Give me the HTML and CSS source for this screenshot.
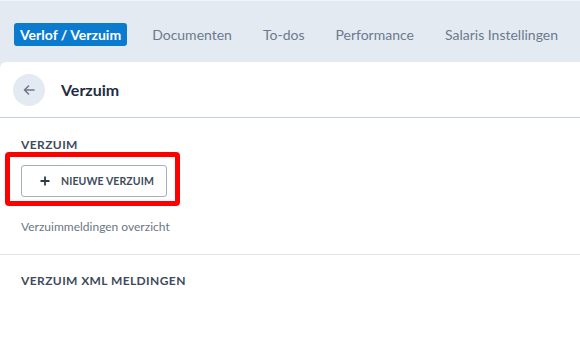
FILE: index.html
```html
<!DOCTYPE html>
<html lang="nl">
<head>
    <meta charset="UTF-8">
    <title>Verzuim</title>
    <link rel="stylesheet" href="styles.css">
</head>
<body>
    <div class="tabs">
        <a href="#" class="tab active">Verlof / Verzuim</a>
        <a href="#" class="tab">Documenten</a>
        <a href="#" class="tab">To-dos</a>
        <a href="#" class="tab">Performance</a>
        <a href="#" class="tab">Salaris Instellingen</a>
    </div>
    <div class="panel">
        <div class="panel-header">
            <button type="button" class="back-btn">
                <svg width="14" height="14" viewBox="0 0 14 14">
                    <path d="M12 7H2.5M6.5 3L2.5 7l4 4" fill="none" stroke="#6b7a8d" stroke-width="1.6" stroke-linecap="round" stroke-linejoin="round"/>
                </svg>
            </button>
            <h1>Verzuim</h1>
        </div>
        <div class="section">
            <h3>VERZUIM</h3>
            <div class="btn-wrap">
                <button type="button" class="btn-outline">
                    <svg class="plus" width="10" height="10" viewBox="0 0 10 10">
                        <path d="M5 0.5v9M0.5 5h9" stroke="#2d3a4a" stroke-width="1.8"/>
                    </svg>
                    NIEUWE VERZUIM
                </button>
                <div class="highlight"></div>
            </div>
            <p class="muted">Verzuimmeldingen overzicht</p>
        </div>
        <div class="section second">
            <h3>VERZUIM XML MELDINGEN</h3>
        </div>
    </div>
</body>
</html>
```

FILE: styles.css
```css
body {
    margin: 0;
    padding: 0;
    font-family: Lato, "Noto Sans", sans-serif;
    background-color: #e4eaf2;
    height: 346px;
    display: flex;
    flex-direction: column;
    overflow: hidden;
}

.tabs {
    display: flex;
    gap: 19px;
    padding: 22px 14px 0;
    height: 39px;
    border-top: 1px solid #f2f5f9;
}

.tab {
    height: 23px;
    line-height: 24px;
    padding: 0 6px;
    font-size: 14px;
    color: #6b7a8d;
    text-decoration: none;
    border-radius: 3px;
    white-space: nowrap;
}

.tab.active {
    background-color: #0a7bcf;
    color: white;
    font-weight: bold;
}

.panel {
    flex: 1;
    background-color: white;
    border-top-left-radius: 6px;
}

.panel-header {
    display: flex;
    align-items: center;
    gap: 16px;
    height: 55px;
    padding: 0 13px;
    border-bottom: 1px solid #c4d0db;
}

.back-btn {
    width: 32px;
    height: 32px;
    border: none;
    border-radius: 50%;
    background-color: #e4eaf2;
    display: flex;
    align-items: center;
    justify-content: center;
    padding: 0;
}

.panel-header h1 {
    margin: 0;
    font-size: 16px;
    font-weight: bold;
    color: #1f2d3d;
}

.section {
    padding: 19px 21px 20px;
}

.section.second {
    padding-top: 18px;
    border-top: 1px solid #e3e3e3;
}

.section h3 {
    margin: 0;
    font-size: 12px;
    font-weight: bold;
    letter-spacing: 0.4px;
    color: #3e4b5b;
}

.btn-wrap {
    position: relative;
    width: 146px;
    margin-top: 13px;
}

.btn-outline {
    width: 146px;
    height: 32px;
    background: white;
    border: 1px solid #a3b0be;
    border-radius: 3px;
    font-family: inherit;
    font-size: 10.5px;
    font-weight: bold;
    letter-spacing: 0.1px;
    color: #3e4b5b;
    display: flex;
    align-items: center;
    padding: 0 0 0 18px;
}

.plus {
    margin-right: 11px;
}

.highlight {
    position: absolute;
    left: -16px;
    top: -13px;
    width: 175px;
    height: 54px;
    box-sizing: border-box;
    border: 5px solid #ff0000;
    border-radius: 4px;
}

.muted {
    margin: 22px 0 0;
    font-size: 12px;
    color: #6b7785;
}
```
